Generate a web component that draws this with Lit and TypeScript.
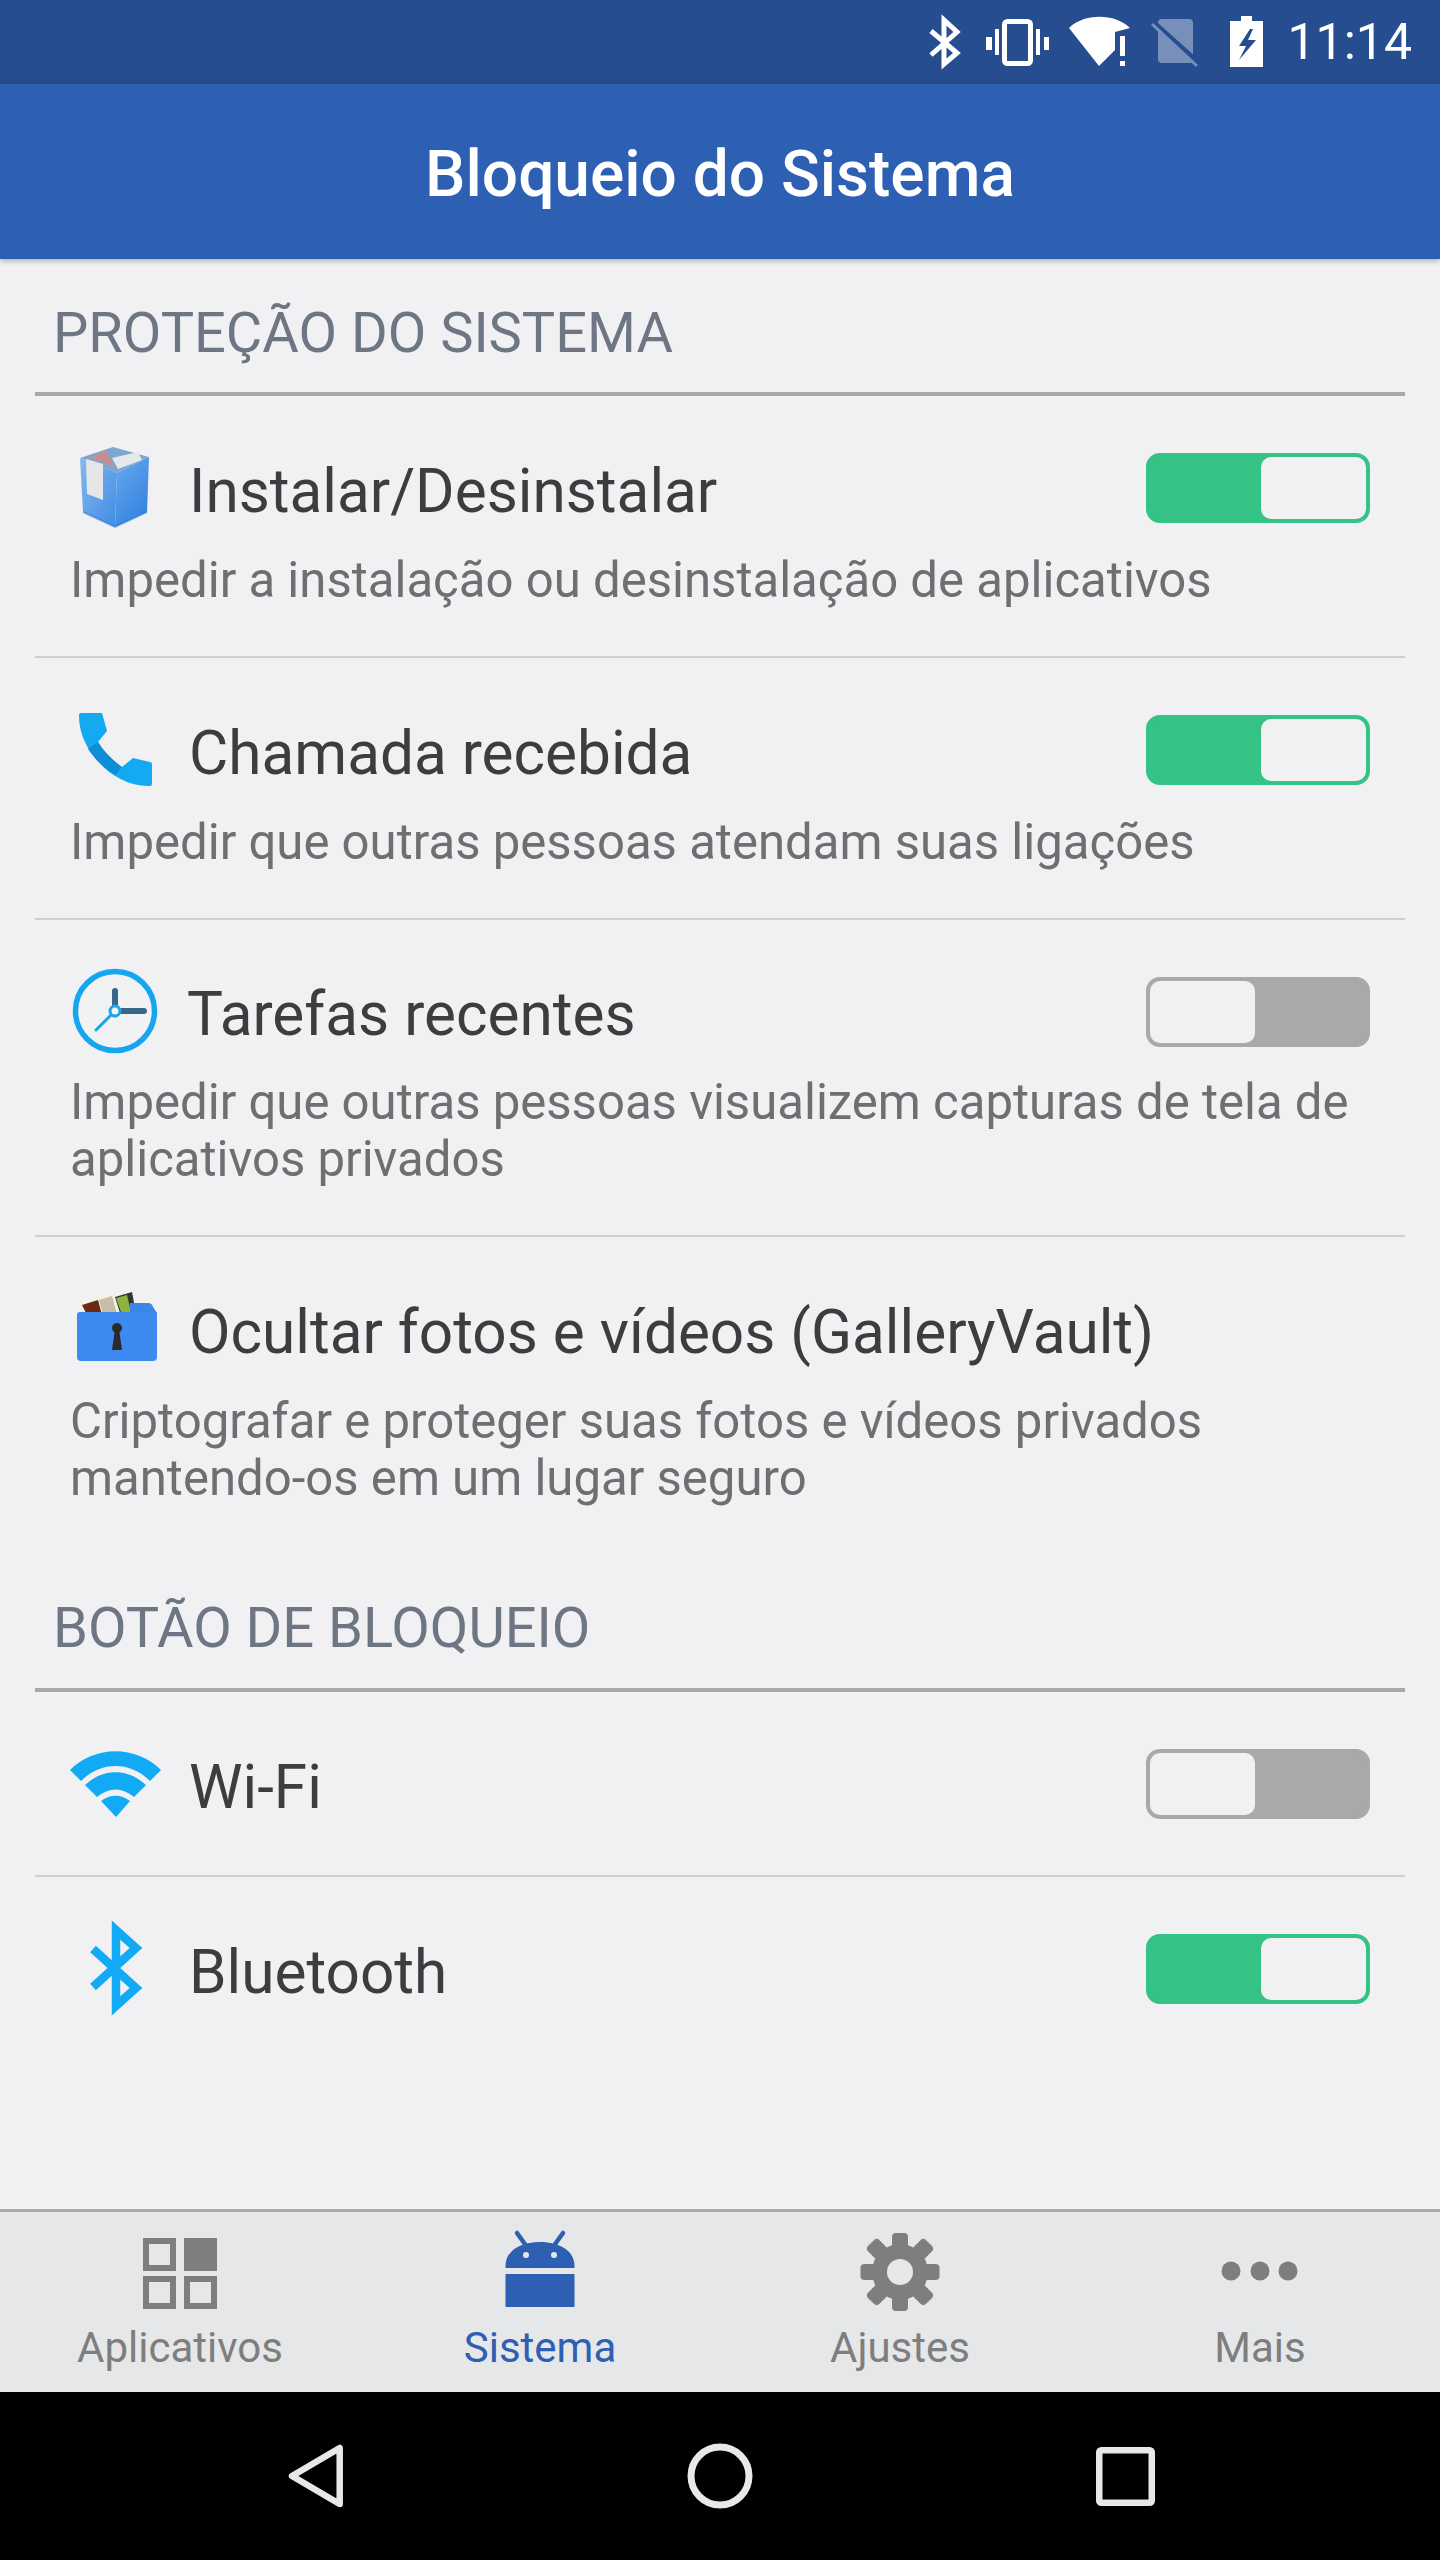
import { LitElement, html, css, svg } from "lit";
import { customElement } from "lit/decorators.js";

const ICONS: Record<string, unknown> = {
  box: svg`<svg class="ic" width="110" height="100" viewBox="60 440 110 100">
    <defs><linearGradient id="bx" x1="0" y1="0" x2="1" y2="1"><stop offset="0" stop-color="#86b8ee"/><stop offset="1" stop-color="#3f8ce6"/></linearGradient>
    <linearGradient id="bx2" x1="0" y1="0" x2="0.6" y2="1"><stop offset="0" stop-color="#6aa9ec"/><stop offset="1" stop-color="#3484e2"/></linearGradient>
    <filter id="sf"><feGaussianBlur stdDeviation="0.6"/></filter></defs>
    <g filter="url(#sf)">
    <path d="M80 458 L113 447 L149 457 L117 473Z" fill="#7fa6cc"/>
    <path d="M90 458 L106 450 L114 466Z" fill="#c58e92"/><path d="M112 458 L138 452 L142 460 L118 469Z" fill="#e6e9ec"/>
    <path d="M80 458 L117 473 L115 527 L83 512Z" fill="url(#bx)"/>
    <path d="M117 473 L149 457 L147 512 L115 527Z" fill="url(#bx2)"/>
    <path d="M86 459 L103 464 L103 500 L87 494Z" fill="#e4e6e7"/>
    <path d="M83 512 L115 527 L147 512" fill="none" stroke="#2a6fd0" stroke-opacity=".5" stroke-width="2"/>
    </g></svg>`,
  phone: svg`<svg class="ic" width="110" height="100" viewBox="60 703 110 100">
    <path d="M81 714 H102 L107 732 L98 743 C104 753 112 761 122 768 L133 759 L150 763 Q152 763 152 766 V785 Q152 787 150 787 C112 788 78 750 79 716 Q79 714 81 714Z" fill="#14aaf2"/>
    <path d="M88 750 L98 743 C104 753 112 761 122 768 L115 776 C104 769 95 760 88 750Z" fill="#0d8fd6"/></svg>`,
  clock: svg`<svg class="ic" width="110" height="100" viewBox="60 964 110 100">
    <circle cx="115" cy="1011" r="39.500" fill="#f1f2f4" stroke="#17a6ee" stroke-width="5.500"/>
    <path d="M115 1011 V991 M115 1011 H144" stroke="#38678a" stroke-width="6" stroke-linecap="round"/>
    <path d="M115 1011 L96 1030" stroke="#17a6ee" stroke-width="3" stroke-linecap="round"/>
    <circle cx="115" cy="1011" r="5" fill="#f1f2f4" stroke="#17a6ee" stroke-width="3"/></svg>`,
  folder: svg`<svg class="ic" width="110" height="100" viewBox="60 1282 110 100">
    <defs><filter id="sf2"><feGaussianBlur stdDeviation="0.4"/></filter></defs>
    <g filter="url(#sf2)">
    <path d="M77 1304 L113 1291 L122 1318 L84 1320Z" fill="#f4f1e8"/><path d="M82 1306 L98 1301 L102 1316 L87 1316Z" fill="#6b2c14"/><path d="M99 1301 L112 1297 L117 1315 L103 1316Z" fill="#c8bda8"/>
    <path d="M115 1298 L132 1293 L136 1314 L120 1314Z" fill="#2c3a2a"/><path d="M116 1299 L127 1296 L131 1313 L121 1313Z" fill="#8fb33f"/>
    <path d="M130 1304 H148 Q152 1304 153 1308 L157 1314 V1320 H130Z" fill="#3a86e8"/>
    <path d="M77 1316 Q77 1313 80 1313 H154 Q157 1313 157 1316 V1358 Q157 1362 153 1362 H81 Q77 1362 77 1358Z" fill="#3d8bf0"/>
    <circle cx="117" cy="1329" r="5" fill="#2a2a2a"/><path d="M115 1330 H119 L122 1351 H112Z" fill="#2a2a2a"/></g></svg>`,
  wifi: svg`<svg class="ic" width="110" height="100" viewBox="60 1736 110 100">
    <path d="M70 1770 C95 1745 136 1745 161 1770 L150 1781 C130 1761 101 1761 81 1781Z M85 1785 C103 1768 128 1768 146 1785 L134 1797 C122 1787 109 1787 97 1797Z M101 1801 C110 1794 121 1794 130 1801 L116 1817Z" fill="#12aaf5"/></svg>`,
  bt: svg`<svg class="ic" width="110" height="100" viewBox="60 1922 110 100">
    <path d="M93 1950 L136 1989 L116 2007 V1931 L136 1949 L93 1988" fill="none" stroke="#12aaf5" stroke-width="8.500" stroke-linecap="butt"/></svg>`,
};

const STATUS = svg`<svg class="status-ic" width="340" height="84" viewBox="925 0 340 84">
  <path d="M930 31 L956 53 L943 64 V20 L956 32 L930 55" fill="none" stroke="#fff" stroke-width="5"/>
  <rect x="1003.500" y="21.500" width="26" height="42" rx="3" fill="none" stroke="#fff" stroke-width="5"/>
  <path d="M985 37 h6 v13 h-6Z M994 29 h4 v26 h-4Z M1035 29 h4 v26 h-4Z M1043 37 h5 v13 h-5Z" fill="#fff"/>
  <path d="M1068 28 C1083 13 1114 13 1129 28 L1114 32 V50 L1098 66Z" fill="#fff"/>
  <path d="M1119 36 h5 v20 h-5Z M1119 61 h5 v5 h-5Z" fill="#fff"/>
  <rect x="1157" y="19" width="35" height="44" rx="4" fill="#fff" fill-opacity=".38"/>
  <path d="M1150 20 L1198 63" stroke="#264d8f" stroke-width="5"/>
  <path d="M1151 24 L1196 66" stroke="#7391bf" stroke-width="3"/>
  <path fill-rule="evenodd" d="M1240 16 H1251 V21 H1262 V67 H1229 V21 H1240Z M1249 29 L1238 46 H1245 L1238 60 L1255 40 H1247 L1252 29Z" fill="#fff"/></svg>`;

const NAV = [
  { label: "Aplicativos", on: false, icon: svg`<svg width="110" height="90" viewBox="-55 -45 110 90"><g fill="none" stroke="#7e7e7e" stroke-width="6"><rect x="-34" y="-32" width="27" height="27"/><rect x="-34" y="6" width="27" height="27"/><rect x="7" y="6" width="27" height="27"/></g><rect x="4" y="-35" width="33" height="33" fill="#7e7e7e"/></svg>` },
  { label: "Sistema", on: true, icon: svg`<svg width="110" height="90" viewBox="-55 -45 110 90"><path d="M-23 -40 L-13 -26 M23 -40 L13 -26" stroke="#2d5fb3" stroke-width="4.500" stroke-linecap="round"/><path d="M-34.500 -5 V-7 C-34.500 -22 -20 -31 0 -31 C20 -31 34.500 -22 34.500 -7 V-5Z" fill="#2d5fb3"/><rect x="-34.500" y="1" width="69" height="33" fill="#2d5fb3"/><circle cx="-14" cy="-18" r="3" fill="#e6e7e9"/><circle cx="14" cy="-18" r="3" fill="#e6e7e9"/></svg>` },
  { label: "Ajustes", on: false, icon: svg`<svg width="110" height="90" viewBox="-55 -45 110 90"><g fill="#7e7e7e" transform="translate(0,-1)"><rect x="-8" y="-39" width="16" height="78" rx="4"/><rect x="-8" y="-41" width="16" height="82" rx="4" transform="rotate(45)"/><rect x="-8" y="-39.500" width="16" height="79" rx="4" transform="rotate(90)"/><rect x="-8" y="-41" width="16" height="82" rx="4" transform="rotate(135)"/><circle r="28"/><circle r="13" fill="#e6e7e9"/></g></svg>` },
  { label: "Mais", on: false, icon: svg`<svg width="110" height="90" viewBox="-55 -45 110 90"><g fill="#7e7e7e"><circle cx="-29" cy="-2" r="9.500"/><circle cx="0" cy="-2" r="9.500"/><circle cx="28" cy="-2" r="9.500"/></g></svg>` },
];

@customElement("app-root")
export class AppRoot extends LitElement {
  static styles = css`
    :host { display: block; width: 1440px; height: 2560px; font-family: Roboto, "Noto Sans", sans-serif; background: #f1f1f4; }
    .screen { display: flex; flex-direction: column; height: 2560px; }
    .statusbar { height: 84px; background: #264d8f; display: flex; align-items: center; justify-content: flex-end; color: #fff; font-size: 50px; padding-right: 28px; flex: none; }
    .status-ic { display: block; margin-right: 21px; }
    .appbar { height: 175px; padding-top: 5px; box-sizing: border-box; background: #2d5fb3; display: flex; align-items: center; justify-content: center; color: #fff; font-size: 64px; font-weight: 500; box-shadow: 0 2px 5px rgba(0,0,0,.28); flex: none; position: relative; }
    .content { flex: 1; padding: 0 35px; }
    .section { height: 137px; display: flex; align-items: flex-end; padding-left: 18px; color: #6f7683; font-size: 56px; border-bottom: 4px solid #a9a9a9; box-sizing: border-box; line-height: 1; }
    .section span { margin-bottom: 31px; }
    .section.second { height: 129px; }
    .section.second span { margin-bottom: 32px; }
    .row { border-bottom: 2px solid #cfcfd1; padding: 44px 35px 0; box-sizing: border-box; }
    .row.last { border-bottom: none; }
    .head { display: flex; align-items: center; height: 100px; margin-left: -35px; }
    .ic { display: block; margin-left: 25px; flex: none; }
    .title { font-size: 60.300px; color: #3c3d3f; margin-left: 19px; padding-top: 2px; flex: 1; white-space: nowrap; }
    .tight { margin-left: 17px; padding-top: 0; }
    .desc { font-size: 49.100px; color: #6e6f71; line-height: 57px; margin: 12px -15px 0 0; }
    .row.p2 .desc { margin-top: 10px; }
    .row.p1 { height: 262px; }
    .row.p2 { height: 317px; }
    .row.p3 { height: 326px; border-bottom: none; }
    .row.s { height: 185px; }
    .toggle { width: 224px; height: 70px; box-sizing: border-box; border-radius: 14px; border: 4px solid; display: flex; flex: none; position: relative; top: -2px; }
    .toggle i { display: block; }
    .toggle .fill { flex: 1; }
    .toggle .knob { width: 105px; background: #f1f1f4; border-radius: 10px; }
    .toggle.on { border-color: #34c385; background: #34c385; }
    .toggle.off { border-color: #a9a9a9; background: #a9a9a9; }
    .nav { height: 183px; box-sizing: border-box; background: #e6e7e9; border-top: 3px solid #a9a9a9; display: grid; grid-template-columns: repeat(4, 1fr); flex: none; }
    .tab { display: flex; flex-direction: column; align-items: center; color: #7e7e7e; font-size: 42px; line-height: 50px; padding-top: 16px; }
    .tab svg { display: block; }
    .tab.on { color: #2d5fb3; }
    .tab span { margin-top: 5px; }
    .sysbar { height: 168px; background: #000; display: flex; align-items: center; justify-content: center; gap: 325px; flex: none; }
    .sysbar svg { display: block; flex: none; }
  `;

  private toggle(on: boolean) {
    return on
      ? html`<div class="toggle on"><i class="fill"></i><i class="knob"></i></div>`
      : html`<div class="toggle off"><i class="knob"></i><i class="fill"></i></div>`;
  }

  render() {
    return html`<div class="screen">
      <div class="statusbar">${STATUS}<span>11:14</span></div>
      <div class="appbar">Bloqueio do Sistema</div>
      <div class="content">
        <div class="section"><span>PROTEÇÃO DO SISTEMA</span></div>
        <div class="row p1">
          <div class="head">${ICONS.box}<div class="title">Instalar/Desinstalar</div>${this.toggle(true)}</div>
          <div class="desc">Impedir a instalação ou desinstalação de aplicativos</div>
        </div>
        <div class="row p1">
          <div class="head">${ICONS.phone}<div class="title">Chamada recebida</div>${this.toggle(true)}</div>
          <div class="desc">Impedir que outras pessoas atendam suas ligações</div>
        </div>
        <div class="row p2">
          <div class="head">${ICONS.clock}<div class="title tight">Tarefas recentes</div>${this.toggle(false)}</div>
          <div class="desc">Impedir que outras pessoas visualizem capturas de tela de aplicativos privados</div>
        </div>
        <div class="row p3">
          <div class="head">${ICONS.folder}<div class="title">Ocultar fotos e vídeos (GalleryVault)</div></div>
          <div class="desc">Criptografar e proteger suas fotos e vídeos privados mantendo-os em um lugar seguro</div>
        </div>
        <div class="section second"><span>BOTÃO DE BLOQUEIO</span></div>
        <div class="row s">
          <div class="head">${ICONS.wifi}<div class="title">Wi-Fi</div>${this.toggle(false)}</div>
        </div>
        <div class="row s last">
          <div class="head">${ICONS.bt}<div class="title">Bluetooth</div>${this.toggle(true)}</div>
        </div>
      </div>
      <div class="nav">
        ${NAV.map((n) => html`<div class="tab ${n.on ? "on" : ""}">${n.icon}<span>${n.label}</span></div>`)}
      </div>
      <div class="sysbar">
        <svg width="80" height="80" viewBox="0 0 80 80"><path d="M64.700 12 V68 L17 40Z" fill="none" stroke="#e8e8e8" stroke-width="6.500" stroke-linejoin="round"/></svg>
        <svg width="80" height="80" viewBox="0 0 80 80"><circle cx="40" cy="40" r="29" fill="none" stroke="#e8e8e8" stroke-width="7"/></svg>
        <svg width="80" height="80" viewBox="0 0 80 80"><rect x="14.250" y="14.250" width="52.500" height="52.500" rx="2" fill="none" stroke="#e8e8e8" stroke-width="6.500"/></svg>
      </div>
    </div>`;
  }
}
